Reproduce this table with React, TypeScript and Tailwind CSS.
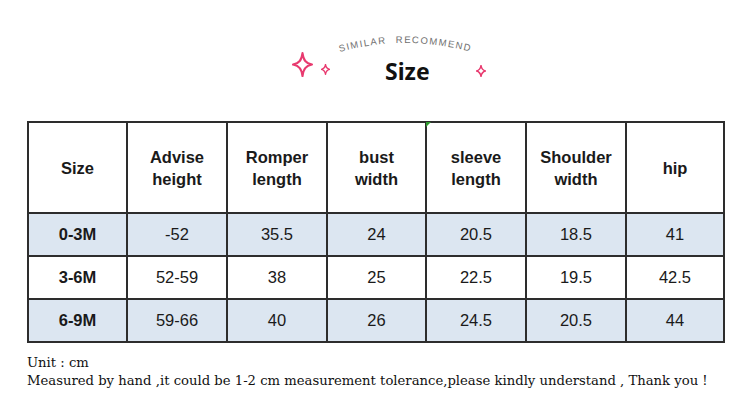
import React from "react";

const headers = [
  ["Size"],
  ["Advise", "height"],
  ["Romper", "length"],
  ["bust", "width"],
  ["sleeve", "length"],
  ["Shoulder", "width"],
  ["hip"],
];

const widths = ["w-[99px]", "w-[100px]", "w-[100px]", "w-[99px]", "w-[100px]", "w-[100px]", "w-[98px]"];

const rows = [
  ["0-3M", "-52", "35.5", "24", "20.5", "18.5", "41"],
  ["3-6M", "52-59", "38", "25", "22.5", "19.5", "42.5"],
  ["6-9M", "59-66", "40", "26", "24.5", "20.5", "44"],
];

function Sparkle({ size, stroke = 2 }: { size: number; stroke?: number }) {
  return (
    <svg width={size} height={size * 1.2} viewBox="0 0 20 24" fill="none">
      <path
        d="M10 1 C11 8 13 10.5 19 12 C13 13.5 11 16 10 23 C9 16 7 13.5 1 12 C7 10.5 9 8 10 1 Z"
        stroke="#e83a6f"
        strokeWidth={stroke}
        strokeLinejoin="round"
      />
    </svg>
  );
}

export default function App() {
  return (
    <div className="w-[750px] h-[408px] bg-white overflow-hidden" style={{ fontFamily: "'Liberation Sans', Arial, sans-serif" }}>
      <div className="h-[121px] pl-[290px] pt-[29px]">
        <svg width="150" height="26" viewBox="0 0 150 26" className="ml-[43px] block">
          <defs>
            <path id="arc" d="M0 25 Q70 3 146 25" />
          </defs>
          <text fill="#707070" fontSize="9.5" letterSpacing="1.4" fontFamily="'Liberation Sans', Arial, sans-serif">
            <textPath href="#arc" startOffset="7">
              SIMILAR
            </textPath>
          </text>
          <text fill="#707070" fontSize="9.5" letterSpacing="1.4" fontFamily="'Liberation Sans', Arial, sans-serif">
            <textPath href="#arc" startOffset="64">
              RECOMMEND
            </textPath>
          </text>
        </svg>
        <div className="flex items-start h-[40px]">
          <div className="ml-[2px] mt-[-3px]">
            <Sparkle size={21} stroke={2} />
          </div>
          <div className="ml-[8px] mt-[9px]">
            <Sparkle size={9} stroke={3} />
          </div>
          <div
            className="ml-[55px] mt-[2px] text-[23px] leading-[28px] font-bold text-[#111]"
            style={{ fontFamily: "'Noto Sans', sans-serif" }}
          >
            Size
          </div>
          <div className="ml-[46px] mt-[10px]">
            <Sparkle size={10} stroke={3} />
          </div>
        </div>
      </div>
      <div className="pl-[27px]">
        <table className="border-collapse border-2 border-[#2d2d2d] text-[#1a1a1a] text-[16.5px]">
          <tbody>
            <tr className="h-[91px]">
              {headers.map((h, i) => (
                <td
                  key={i}
                  className={`relative border-2 border-[#2d2d2d] text-center font-bold leading-[22px] p-0 ${widths[i]}`}
                >
                  {i === 4 && (
                    <span className="absolute left-[-1px] top-[-1px] w-0 h-0 border-t-[5px] border-r-[5px] border-t-[#2e9a2e] border-r-transparent" />
                  )}
                  {h.map((l, j) => (
                    <div key={j}>{l}</div>
                  ))}
                </td>
              ))}
            </tr>
            {rows.map((r, ri) => (
              <tr key={ri} className={`h-[43px] ${ri === 1 ? "bg-white" : "bg-[#dce6f1]"}`}>
                {r.map((c, ci) => (
                  <td
                    key={ci}
                    className={`border-2 border-[#2d2d2d] text-center p-0 ${ci === 0 ? "font-bold" : ""}`}
                  >
                    {c}
                  </td>
                ))}
              </tr>
            ))}
          </tbody>
        </table>
      </div>
      <div
        className="pl-[27px] mt-[11px] text-[13.2px] leading-[18px] text-[#111]"
        style={{ fontFamily: "'DejaVu Serif', serif" }}
      >
        <div>Unit : cm</div>
        <div>Measured by hand ,it could be 1-2 cm measurement tolerance,please kindly understand , Thank you !</div>
      </div>
    </div>
  );
}
